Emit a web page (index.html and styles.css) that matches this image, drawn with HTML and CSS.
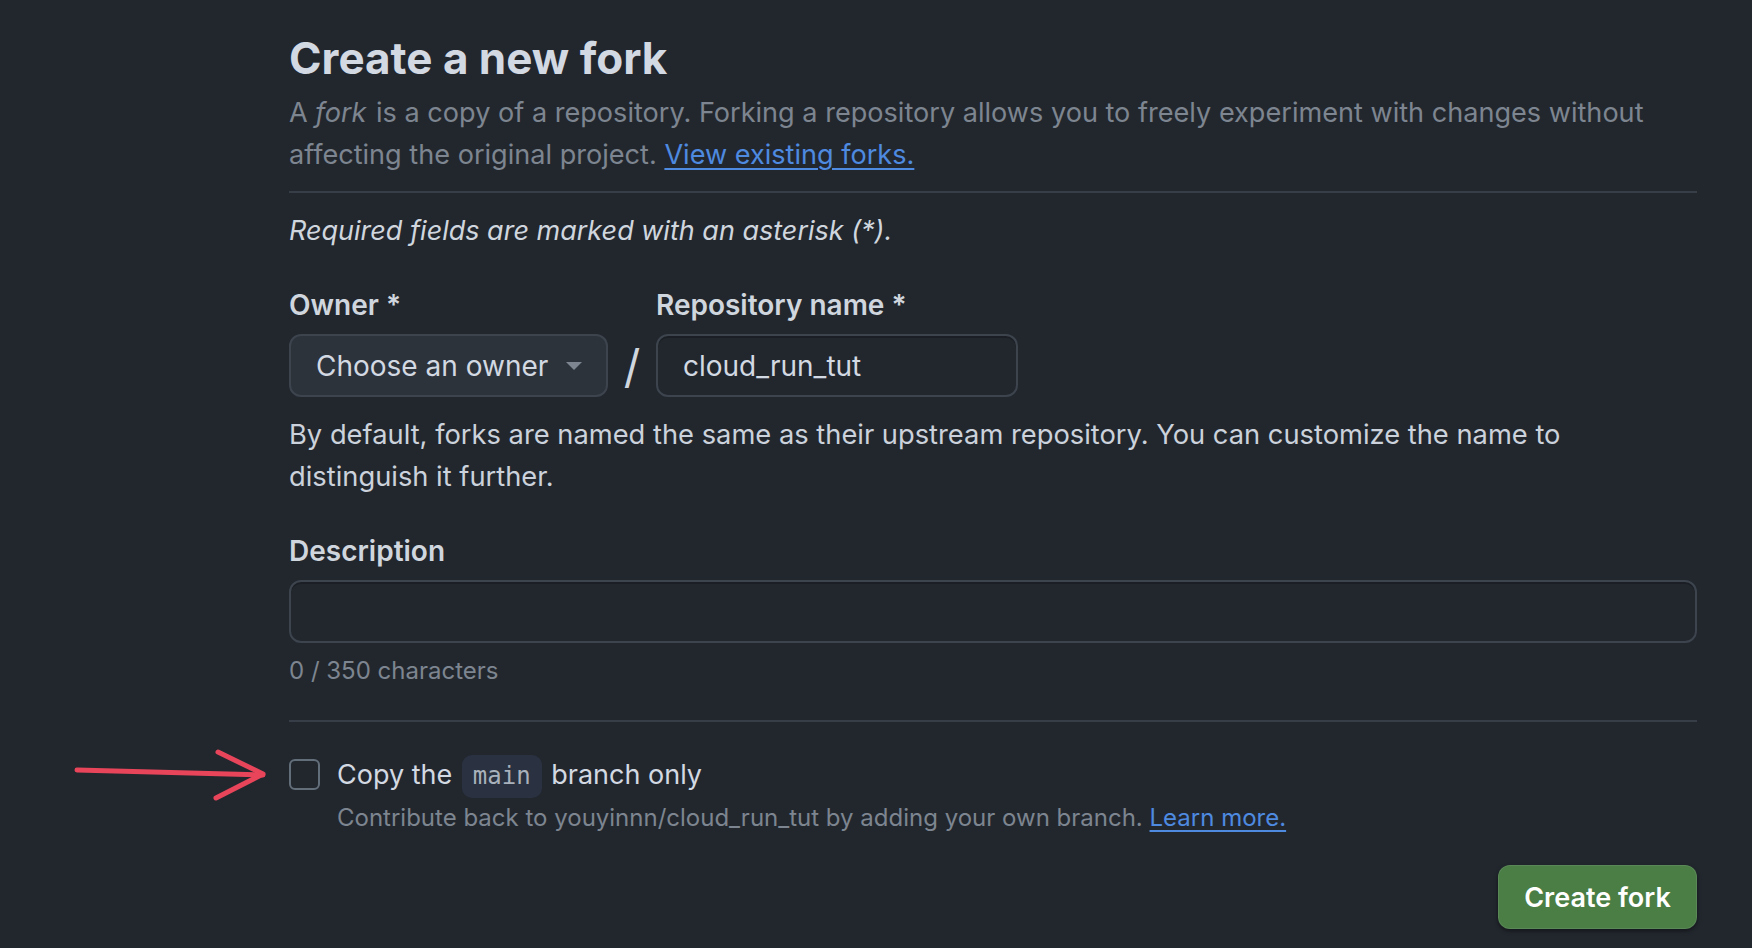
FILE: index.html
```html
<!DOCTYPE html>
<html lang="en">
<head>
<meta charset="utf-8">
<title>Create a new fork</title>
<link rel="stylesheet" href="styles.css">
</head>
<body>
<main class="page">
  <div class="subhead">
    <h1 class="title">Create a new fork</h1>
    <p class="lead">A <em class="em">fork</em> is a copy of a repository. Forking a repository allows you to freely experiment with changes without affecting the original project. <a href="#" class="link">View existing forks.</a></p>
  </div>
  <p class="required">Required fields are marked with an asterisk (*).</p>
  <div class="name-row">
    <div class="field">
      <label class="label">Owner *</label>
      <div class="select">
        <span>Choose an owner</span>
        <span class="caret"></span>
      </div>
    </div>
    <span class="slash">/</span>
    <div class="field">
      <label class="label">Repository name *</label>
      <div class="input repo">cloud_run_tut</div>
    </div>
  </div>
  <p class="help">By default, forks are named the same as their upstream repository. You can customize the name to distinguish it further.</p>
  <div class="field desc">
    <label class="label">Description</label>
    <div class="input wide"></div>
    <p class="count">0 / 350 characters</p>
  </div>
  <hr class="divider">
  <div class="check-row">
    <span class="checkbox"></span>
    <div class="check-text">
      <div class="check-label">Copy the <code class="code">main</code> branch only</div>
      <div class="check-note">Contribute back to youyinnn/cloud_run_tut by adding your own branch. <a href="#" class="link">Learn more.</a></div>
    </div>
  </div>
  <div class="actions">
    <button class="btn-primary">Create fork</button>
  </div>
</main>
<svg class="arrow" width="300" height="80" viewBox="0 0 300 80" aria-hidden="true">
  <path d="M8 21 L194 26" stroke="#e8455b" stroke-width="5" stroke-linecap="round" fill="none"/>
  <path d="M149 3 L194 25 L147 49" stroke="#e8455b" stroke-width="5" stroke-linecap="round" stroke-linejoin="round" fill="none"/>
</svg>
</body>
</html>
```
FILE: styles.css
```css
* { box-sizing: border-box; }
html, body { margin: 0; padding: 0; }
body {
  background: #22272e;
  color: #cdd9e5;
  font-family: Inter, "Noto Sans", "Liberation Sans", sans-serif;
  height: 948px;
  overflow: hidden;
  position: relative;
}
.page {
  width: 1408px;
  margin-left: 289px;
  padding-top: 30px;
}
.subhead {
  padding-bottom: 15px;
  border-bottom: 2px solid #373e47;
}
.title {
  margin: 0;
  font-size: 44px;
  line-height: 56px;
  font-weight: 700;
  color: #d3d9e2;
}
.lead {
  margin: 6px 0 0;
  font-size: 27.1px;
  line-height: 42px;
  color: #7d8590;
}
.em { padding-right: 2px; }
.link { color: #4e8ae0; text-decoration: underline; text-underline-offset: 4px; text-decoration-thickness: 2px; }
.required {
  margin: 17px 0 0;
  font-size: 27px;
  line-height: 42px;
  font-style: italic;
  color: #d0d6de;
}
.name-row {
  display: flex;
  align-items: flex-end;
  margin-top: 32px;
}
.field { display: flex; flex-direction: column; }
.label {
  font-size: 28px;
  line-height: 42px;
  font-weight: 600;
  color: #d0d6de;
  margin-bottom: 8px;
}
.select {
  width: 319px;
  height: 63px;
  display: flex;
  align-items: center;
  justify-content: space-between;
  padding: 0 26px 0 25px;
  background: #2d333b;
  border: 2px solid #3d444d;
  border-radius: 12px;
  font-size: 28px;
  color: #d3d9e2;
}
.caret {
  width: 0; height: 0;
  border-left: 8px solid transparent;
  border-right: 8px solid transparent;
  border-top: 8px solid #7d8590;
  margin-right: -2px;
}
.slash {
  width: 48px;
  height: 63px;
  display: flex;
  align-items: center;
  justify-content: center;
  font-size: 46px;
  font-weight: 400;
  color: #d0d6de;
}
.input {
  height: 63px;
  display: flex;
  align-items: center;
  padding: 0 25px;
  background: #22272e;
  border: 2px solid #3d444d;
  border-radius: 12px;
  box-shadow: inset 0 2px 0 rgba(0,0,0,0.18);
  font-size: 28px;
  color: #d3d9e2;
}
.repo { width: 362px; }
.wide { width: 1408px; }
.help {
  margin: 17px 0 0;
  font-size: 27.3px;
  line-height: 42px;
  color: #cbd2db;
}
.desc { margin-top: 32px; }
.count {
  margin: 10px 0 0;
  font-size: 24px;
  line-height: 36px;
  color: #7d8590;
}
.divider {
  margin: 31px 0 0;
  border: 0;
  border-top: 2px solid #373e47;
  height: 0;
}
.check-row {
  display: flex;
  align-items: flex-start;
  margin-top: 32px;
}
.checkbox {
  flex: none;
  width: 31px;
  height: 31px;
  margin-top: 5px;
  border: 2px solid #636e7b;
  border-radius: 6px;
}
.check-text { margin-left: 17px; }
.check-label {
  font-size: 27px;
  line-height: 42px;
  color: #d3d9e2;
}
.code {
  display: inline-block;
  font-family: "DejaVu Sans Mono", "Liberation Mono", monospace;
  font-size: 24px;
  line-height: 43px;
  padding: 0 11px;
  margin: 0 2px;
  background: #2a3140;
  color: #a8b1bc;
  border-radius: 10px;
  vertical-align: middle;
}
.check-note {
  margin-top: 2px;
  font-size: 24px;
  line-height: 36px;
  color: #7d8590;
}
.actions {
  display: flex;
  justify-content: flex-end;
  margin-top: 29px;
}
.btn-primary {
  width: 199px;
  height: 64px;
  background: #4a7e44;
  border: 1px solid rgba(205,217,229,0.12);
  border-radius: 12px;
  box-shadow: 0 2px 4px rgba(0,0,0,0.45);
  color: #ffffff;
  font-family: Inter, "Noto Sans", "Liberation Sans", sans-serif;
  font-size: 27px;
  font-weight: 600;
  padding: 0;
}
.arrow {
  position: absolute;
  left: 69px;
  top: 749px;
}
```
